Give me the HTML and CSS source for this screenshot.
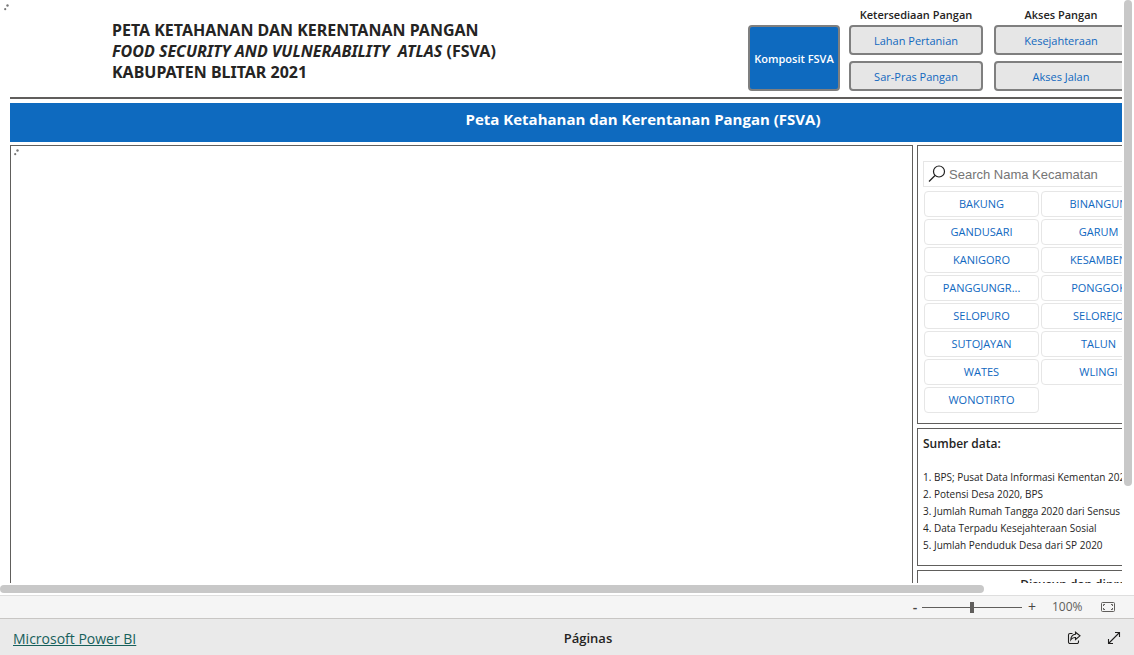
FILE: index.html
```html
<!DOCTYPE html>
<html lang="id">
<head>
<meta charset="utf-8">
<title>Peta Ketahanan dan Kerentanan Pangan</title>
<link rel="stylesheet" href="styles.css">
</head>
<body>
<main class="viewport">
  <div class="canvas-clip">
    <div class="report">
      <svg class="loader loader-page" width="5" height="7" viewBox="0 0 5 7"><circle cx="3.5" cy="1.5" r="1.2"/><circle cx="1.2" cy="5.2" r="1.1"/></svg>
      <header class="report-head">
        <h1 class="report-title">PETA KETAHANAN DAN KERENTANAN PANGAN<br><em>FOOD SECURITY AND VULNERABILITY&nbsp; ATLAS</em> (FSVA)<br>KABUPATEN BLITAR 2021</h1>
        <nav class="report-nav">
          <button class="nav-btn nav-main" type="button">Komposit FSVA</button>
          <div class="nav-groups">
            <div class="nav-group">
              <span class="nav-label">Ketersediaan Pangan</span>
              <button class="nav-btn" type="button">Lahan Pertanian</button>
              <button class="nav-btn" type="button">Sar-Pras Pangan</button>
            </div>
            <div class="nav-group">
              <span class="nav-label">Akses Pangan</span>
              <button class="nav-btn" type="button">Kesejahteraan</button>
              <button class="nav-btn" type="button">Akses Jalan</button>
            </div>
          </div>
        </nav>
      </header>
      <h2 class="banner">Peta Ketahanan dan Kerentanan Pangan (FSVA)</h2>
      <div class="report-body">
        <section class="panel map">
          <svg class="loader" width="5" height="7" viewBox="0 0 5 7"><circle cx="3.5" cy="1.5" r="1.2"/><circle cx="1.2" cy="5.2" r="1.1"/></svg>
        </section>
        <aside class="side">
          <section class="panel slicer">
            <label class="search">
              <svg width="18" height="18" viewBox="0 0 18 18"><circle cx="11" cy="6.500" r="5.500"/><path d="M7 10.500L1 16.500"/></svg>
              <input type="text" placeholder="Search Nama Kecamatan" aria-label="Search Nama Kecamatan">
            </label>
            <div class="tiles">
              <button class="tile" type="button">BAKUNG</button><button class="tile" type="button">BINANGUN</button>
              <button class="tile" type="button">GANDUSARI</button><button class="tile" type="button">GARUM</button>
              <button class="tile" type="button">KANIGORO</button><button class="tile" type="button">KESAMBEN</button>
              <button class="tile" type="button">PANGGUNGR...</button><button class="tile" type="button">PONGGOK</button>
              <button class="tile" type="button">SELOPURO</button><button class="tile" type="button">SELOREJO</button>
              <button class="tile" type="button">SUTOJAYAN</button><button class="tile" type="button">TALUN</button>
              <button class="tile" type="button">WATES</button><button class="tile" type="button">WLINGI</button>
              <button class="tile" type="button">WONOTIRTO</button>
            </div>
          </section>
          <section class="panel sources">
            <h3 class="sources-title">Sumber data:</h3>
            <p>1. BPS; Pusat Data Informasi Kementan 2020</p>
            <p>2. Potensi Desa 2020, BPS</p>
            <p>3. Jumlah Rumah Tangga 2020 dari Sensus</p>
            <p>4. Data Terpadu Kesejahteraan Sosial</p>
            <p>5. Jumlah Penduduk Desa dari SP 2020</p>
          </section>
          <section class="panel credits">Disusun dan diproses oleh</section>
        </aside>
      </div>
    </div>
  </div>
  <div class="scroll-y"><div class="thumb-y"></div></div>
  <div class="scroll-x"><div class="thumb-x"></div></div>
</main>
<div class="zoombar">
  <button class="icon-btn zoom-step" type="button">-</button>
  <input class="zoom-range" type="range" min="0" max="100" value="50" aria-label="Zoom">
  <button class="icon-btn zoom-step zoom-in" type="button">+</button>
  <span class="zoom-value">100%</span>
  <button class="icon-btn" type="button" aria-label="Fit to page">
    <svg width="14" height="10" viewBox="0 0 14 10"><rect x=".5" y=".5" width="13" height="9" rx="1"/><path d="M2.500 4V2.500H4M10 2.500H11.500V4M11.500 6V7.500H10M4 7.500H2.500V6"/></svg>
  </button>
</div>
<footer class="footer">
  <a class="brand" href="#">Microsoft Power BI</a>
  <span class="pages">Páginas</span>
  <div class="actions">
    <button class="icon-btn" type="button" aria-label="Share">
      <svg class="dark" width="14" height="14" viewBox="0 0 14 14"><path d="M5.500 2.500H3A1.500 1.500 0 0 0 1.500 4V11A1.500 1.500 0 0 0 3 12.500H10A1.500 1.500 0 0 0 11.500 11V9.500"/><path d="M8.500 1.200L13 4.800L8.500 8.500V6.500C6.500 6.300 5 7 3.800 8.800C4 5.500 5.500 3.500 8.500 3.200Z"/></svg>
    </button>
    <button class="icon-btn" type="button" aria-label="Full screen">
      <svg class="dark" width="14" height="14" viewBox="0 0 14 14"><path d="M1.500 12.500L12.500 1.500M8 1.500H12.500V6M1.500 8V12.500H6"/></svg>
    </button>
  </div>
</footer>
</body>
</html>
```
FILE: styles.css
```css
* { box-sizing: border-box; }
body {
  margin: 0;
  height: 100vh;
  display: flex;
  flex-direction: column;
  background: #fff;
  color: #252423;
  font-family: "Open Sans", "Noto Sans", sans-serif;
}
button { font-family: inherit; cursor: pointer; }
h1, h2, h3, p { margin: 0; }
.viewport {
  flex: 1;
  min-height: 0;
  display: grid;
  grid-template-columns: minmax(0, 1fr) 12px;
  grid-template-rows: minmax(0, 1fr) 12px;
}
.canvas-clip { overflow: hidden; }
.report {
  position: relative;
  width: 1276px;
  padding-left: 10px;
}
.loader { display: block; fill: #777; }
.loader-page { position: absolute; left: 4px; top: 4px; }
.report-head {
  display: flex;
  justify-content: space-between;
  height: 99px;
  padding-right: 148px;
  border-bottom: 2px solid #605e5c;
}
.report-title {
  padding: 20px 0 0 102px;
  font-family: "Noto Sans", sans-serif;
  font-size: 16px;
  font-weight: 700;
  line-height: 21px;
  white-space: nowrap;
}
.report-nav {
  display: flex;
  align-items: flex-end;
  gap: 9px;
  padding-bottom: 6px;
}
.nav-groups {
  display: flex;
  gap: 11px;
}
.nav-group {
  display: flex;
  flex-direction: column;
  gap: 6px;
  width: 134px;
}
.nav-label {
  margin-bottom: -3px;
  font-size: 11px;
  font-weight: 600;
  line-height: 14px;
  text-align: center;
}
.nav-btn {
  height: 30px;
  padding: 0;
  border: 2px solid #7f7f7f;
  border-radius: 4px;
  background: #e6e6e6;
  color: #1068bf;
  font-size: 11px;
}
.nav-main {
  width: 92px;
  height: 66px;
  background: #0e6abf;
  color: #fff;
  font-weight: 600;
  white-space: nowrap;
}
.banner {
  height: 39px;
  margin-top: 4px;
  background: #0e6abf;
  color: #fff;
  font-size: 15px;
  font-weight: 700;
  line-height: 32px;
  text-align: center;
}
.report-body {
  display: grid;
  grid-template-columns: 903px 1fr;
  gap: 4px;
  margin-top: 3px;
}
.panel { border: 1px solid #605e5c; }
.map { padding: 3px; }
.side {
  display: flex;
  flex-direction: column;
  gap: 4px;
}
.slicer { padding: 15px 5px 10px; }
.search {
  display: flex;
  align-items: center;
  gap: 3px;
  height: 26px;
  padding-left: 4px;
  border: 1px solid #e6e6e6;
}
.search svg { fill: none; stroke: #222; stroke-width: 1.2; }
.search input {
  flex: 1;
  padding: 0;
  border: 0;
  outline: 0;
  font-family: "Liberation Sans", Arial, sans-serif;
  font-size: 13px;
}
.search input::placeholder { color: #757575; }
.tiles {
  display: grid;
  grid-template-columns: 115px 115px;
  gap: 2px;
  padding: 4px 1px 0;
}
.tile {
  height: 26px;
  padding: 0 0 2px;
  border: 1px solid #e6e6e6;
  border-radius: 4px;
  background: #fff;
  color: #1068bf;
  font-size: 11px;
}
.sources {
  padding: 6px 5px 11px;
  font-size: 10px;
  font-weight: 400;
  line-height: 17px;
  white-space: nowrap;
}
.sources-title {
  margin-bottom: 17px;
  font-size: 12px;
  font-weight: 600;
  line-height: 17px;
}
.credits {
  padding-top: 5px;
  font-size: 12px;
  font-weight: 600;
  line-height: 17px;
  text-align: center;
}
.scroll-y { padding: 0 2px; }
.thumb-y {
  height: 83.4%;
  border-radius: 4px;
  background: #c8c8c8;
}
.scroll-x { padding: 2px 0; }
.thumb-x {
  width: 87.7%;
  height: 8px;
  border-radius: 4px;
  background: #c8c8c8;
}
.zoombar {
  display: flex;
  align-items: center;
  justify-content: flex-end;
  height: 23px;
  padding-right: 19px;
  border-top: 1px solid #dedede;
  background: #f5f5f5;
  color: #605e5c;
}
.icon-btn {
  display: flex;
  align-items: center;
  justify-content: center;
  padding: 0;
  border: 0;
  background: none;
}
.icon-btn svg { fill: none; stroke: #605e5c; }
.icon-btn svg.dark { stroke: #201f1e; stroke-width: 1.1; }
.zoom-step {
  width: 14px;
  color: #484644;
  font-size: 14px;
  font-weight: 600;
  line-height: 20px;
}
.zoom-in { margin-left: 3px; font-weight: 400; }
.zoom-range {
  width: 100px;
  height: 12px;
  margin: 0;
  appearance: none;
  background: linear-gradient(#605e5c, #605e5c) center / 100% 1px no-repeat;
}
.zoom-range::-webkit-slider-thumb {
  appearance: none;
  width: 4px;
  height: 11px;
  background: #605e5c;
}
.zoom-value {
  width: 30px;
  margin: 0 19px 0 13px;
  font-size: 12px;
  line-height: 20px;
}
.footer {
  display: grid;
  grid-template-columns: 1fr auto 1fr;
  align-items: center;
  height: 37px;
  padding: 2px 13px 0;
  border-top: 1px solid #c8c6c4;
  background: #eaeaea;
}
.brand {
  justify-self: start;
  color: #17605b;
  font-size: 14px;
}
.pages {
  padding-left: 42px;
  font-size: 13px;
  font-weight: 600;
}
.actions {
  display: flex;
  justify-content: flex-end;
  gap: 26px;
}
```
